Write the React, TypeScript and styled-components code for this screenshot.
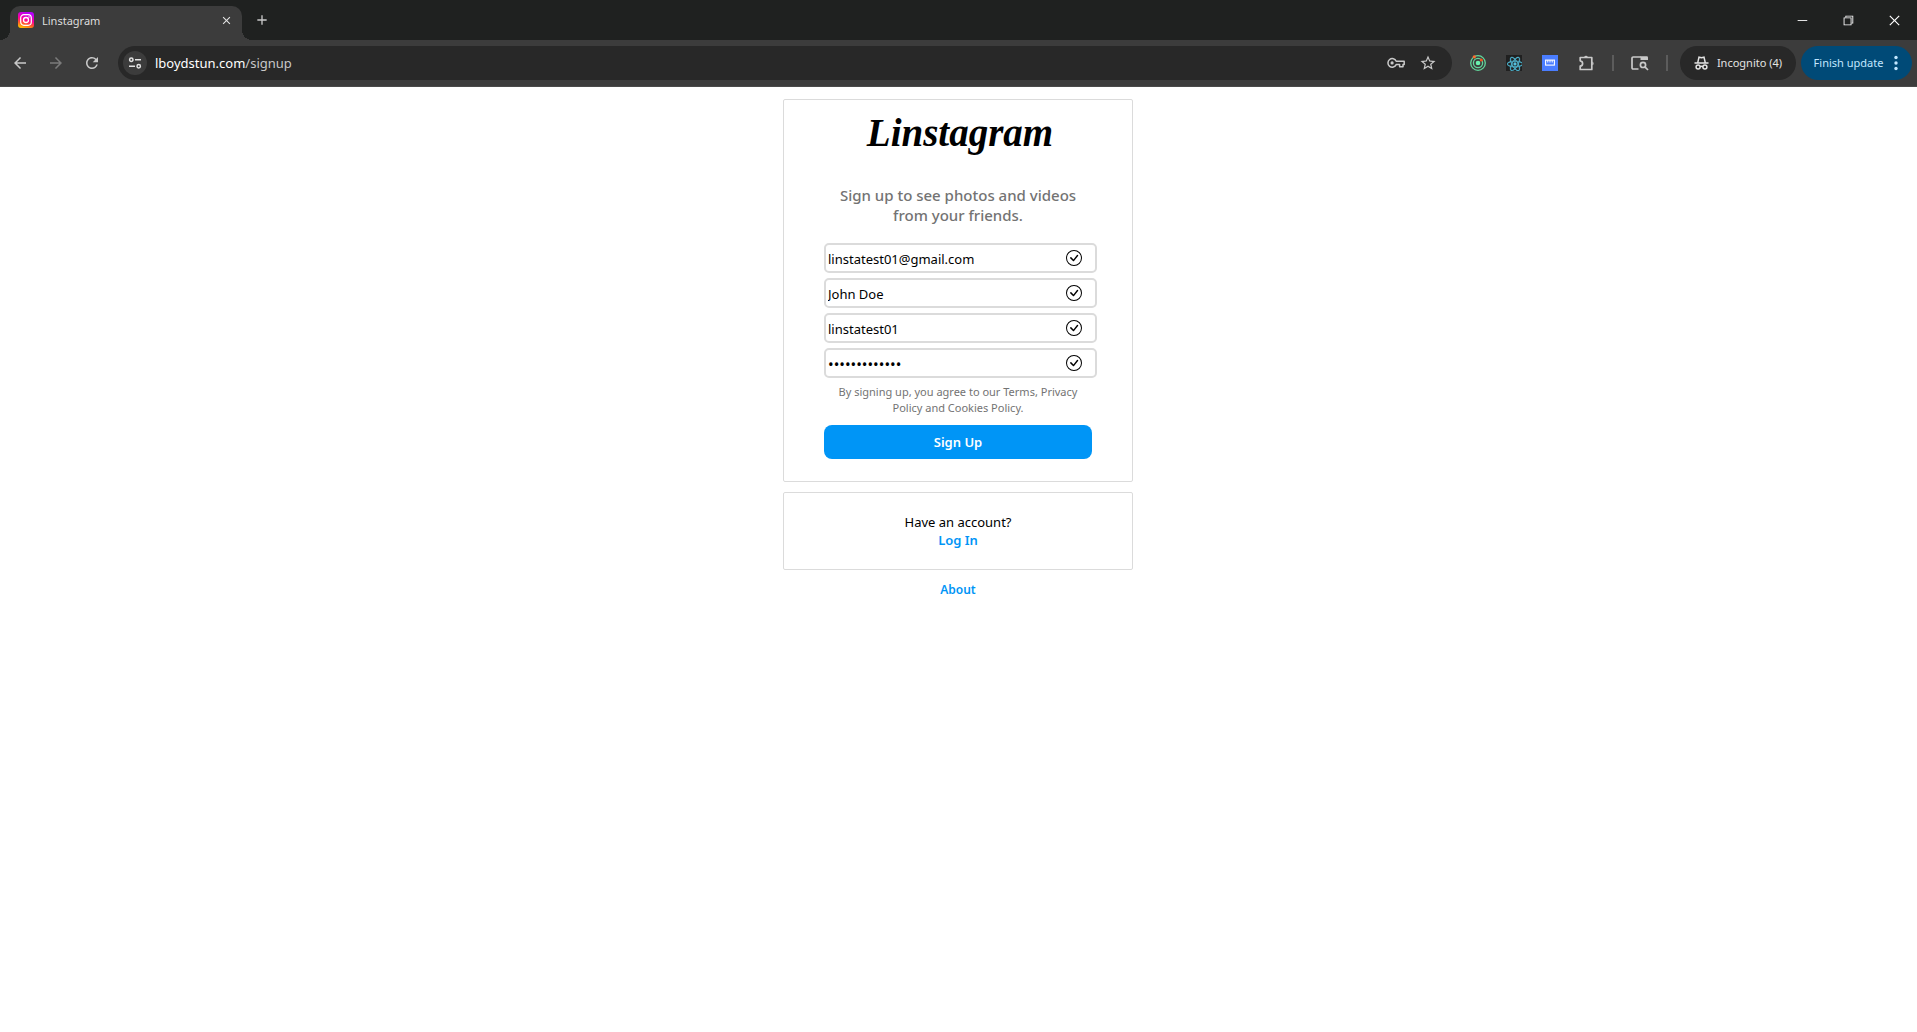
import React from 'react';
import styled, { createGlobalStyle } from 'styled-components';
import { MdArrowBack, MdArrowForward, MdRefresh, MdClose, MdAdd, MdStarBorder } from 'react-icons/md';
import { VscChromeMinimize, VscChromeRestore, VscChromeClose } from 'react-icons/vsc';
import { BsCheckCircle } from 'react-icons/bs';
import { FaReact } from 'react-icons/fa';

const Global = createGlobalStyle`
  * { box-sizing: border-box; }
  body { margin: 0; background: #fff; color: #000; font-family: "Noto Sans", "Open Sans", sans-serif; }
  button { font: inherit; color: inherit; background: none; border: 0; padding: 0; cursor: pointer; }
  input { font: inherit; color: inherit; }
  a { text-decoration: none; }
  svg { display: block; flex: none; }
`;

const TabStrip = styled.header`
  display: flex;
  align-items: flex-end;
  height: 40px;
  padding-left: 10px;
  background: #1f2120;
  color: #dedede;
`;
const Tab = styled.div`
  display: flex;
  align-items: center;
  gap: 8px;
  position: relative;
  width: 232px;
  height: 34px;
  padding: 0 8px;
  padding-bottom: 6px;
  border-radius: 10px 10px 0 0;
  background: #3c3c3c;
  font-size: 11px;
  &::before, &::after {
    content: '';
    position: absolute;
    bottom: 0;
    width: 10px;
    height: 10px;
  }
  &::before { right: 100%; background: radial-gradient(circle at 0 0, transparent 10px, #3c3c3c 10px); }
  &::after { left: 100%; background: radial-gradient(circle at 100% 0, transparent 10px, #3c3c3c 10px); }
`;
const TabTitle = styled.span`flex: 1;`;
const IconButton = styled.button<{ $size?: number; $dim?: boolean }>`
  display: grid;
  place-items: center;
  flex: none;
  width: ${p => p.$size ?? 36}px;
  height: ${p => p.$size ?? 36}px;
  color: ${p => (p.$dim ? '#7b7b7b' : '#c9c9c9')};
`;
const NewTab = styled(IconButton)`margin: 0 0 2px 2px;`;
const WindowControls = styled.div`
  display: flex;
  align-self: stretch;
  margin-left: auto;
  color: #fff;
`;
const WindowButton = styled.button`
  display: grid;
  place-items: center;
  width: 46px;
  height: 40px;
`;

const Toolbar = styled.nav`
  display: flex;
  align-items: center;
  height: 47px;
  padding: 0 5px 1px 2px;
  background: #3c3c3c;
  border-bottom: 1px solid #4a4a4a;
`;
const UrlBar = styled.div`
  display: flex;
  align-items: center;
  flex: 1;
  height: 34px;
  margin: 0 8px;
  padding: 0 8px 0 5px;
  border-radius: 17px;
  background: #282828;
  font-size: 13px;
`;
const SiteInfo = styled(IconButton)`
  margin-right: 8px;
  border-radius: 50%;
  background: #3c3c3c;
`;
const Url = styled.span`flex: 1; color: #c7c7c7;`;
const Host = styled.span`color: #fff;`;
const Divider = styled.span<{ $after: number }>`
  width: 2px;
  height: 16px;
  margin: 0 ${p => p.$after}px 0 8px;
  background: #5c5c5c;
`;
const Pill = styled.button<{ $blue?: boolean }>`
  display: flex;
  align-items: center;
  justify-content: center;
  gap: 8px;
  width: ${p => (p.$blue ? 111 : 116)}px;
  height: 34px;
  margin-left: ${p => (p.$blue ? 5 : 0)}px;
  border-radius: 17px;
  background: ${p => (p.$blue ? '#004a77' : '#282828')};
  color: ${p => (p.$blue ? '#c2e7ff' : '#e3e3e3')};
  font-size: 11px;
  white-space: nowrap;
`;

const Page = styled.main`
  display: flex;
  flex-direction: column;
  align-items: center;
  gap: 10px;
  padding: 12px 1px 0 0;
`;
const Card = styled.section`
  display: flex;
  flex-direction: column;
  align-items: center;
  width: 350px;
  border: 1px solid #dbdbdb;
  border-radius: 2px;
`;
const SignupCard = styled(Card)`padding: 8px 40px 22px;`;
const LoginCard = styled(Card)`
  padding: 20px 0;
  font-size: 13px;
  line-height: 18px;
`;
const Logo = styled.h1`
  margin: 0 0 27px 4px;
  font: italic bold 39px/50px "Liberation Serif", serif;
`;
const Tagline = styled.h2`
  margin: 0 0 18px;
  color: #737373;
  font-size: 15px;
  font-weight: 500;
  line-height: 20px;
  text-align: center;
`;
const Form = styled.form`
  display: flex;
  flex-direction: column;
  width: 268px;
`;
const Field = styled.label`
  display: flex;
  align-items: center;
  width: 273px;
  height: 30px;
  margin-bottom: 5px;
  padding: 0 13px 0 2px;
  border: 2px solid #dbdbdb;
  border-radius: 5px;
`;
const FieldInput = styled.input`
  flex: 1;
  min-width: 0;
  padding: 1px 0 0;
  border: 0;
  outline: 0;
  background: none;
  font-size: 13px;
  &[type='password'] { font-size: 15px; }
`;
const Terms = styled.p`
  margin: 1px 0 9px;
  color: #737373;
  font-size: 11px;
  line-height: 16px;
  text-align: center;
`;
const Submit = styled.button`
  height: 34px;
  border-radius: 8px;
  background: #0095f6;
  color: #fff;
  font-size: 13px;
  font-weight: 600;
`;
const TextLink = styled.a<{ $small?: boolean }>`
  color: #0095f6;
  font-size: ${p => (p.$small ? 12 : 13)}px;
  font-weight: 600;
  line-height: ${p => (p.$small ? 20 : 18)}px;
`;

const Favicon = () => (
  <svg width="16" height="16" viewBox="0 0 16 16" fill="none">
    <defs>
      <linearGradient id="ig" x1="3" y1="16" x2="8" y2="0" gradientUnits="userSpaceOnUse">
        <stop stopColor="#ffc800" /><stop offset=".3" stopColor="#ff5a28" />
        <stop offset=".55" stopColor="#ff0096" /><stop offset="1" stopColor="#b400ff" />
      </linearGradient>
    </defs>
    <rect width="16" height="16" rx="3" fill="url(#ig)" />
    <rect x="2.7" y="2.7" width="10.6" height="10.6" rx="3.2" stroke="#fff" strokeWidth="1.2" />
    <circle cx="8" cy="8" r="2.5" stroke="#fff" strokeWidth="1.3" />
    <circle cx="11" cy="5" r=".7" fill="#fff" />
  </svg>
);
const TuneIcon = () => (
  <svg width="14" height="14" viewBox="0 0 14 14" fill="none" stroke="#e3e3e3" strokeWidth="1.5">
    <circle cx="3.3" cy="3.7" r="1.7" /><path d="M7 3.7h6M1 10.3h6" /><circle cx="10.7" cy="10.3" r="1.7" />
  </svg>
);
const KeyIcon = () => (
  <svg width="18" height="12" viewBox="0 0 18 12" fill="none" stroke="#c9c9c9" strokeWidth="1.5" strokeLinejoin="round">
    <path d="M9.2 4.2H17.2V7.6H16V9.8H12.6V7.6H9.2A4.3 4.3 0 1 1 9.2 4.2Z" />
    <circle cx="5.1" cy="5.9" r="1.6" fill="#c9c9c9" stroke="none" />
  </svg>
);
const OrbitIcon = () => (
  <svg width="16" height="16" viewBox="0 0 16 16" fill="none" stroke="#62d69b" strokeWidth="1.3">
    <circle cx="8" cy="8" r="7.3" /><circle cx="8" cy="8" r="4.6" />
    <circle cx="8" cy="8" r="2.3" fill="#69f0ae" stroke="none" />
    <circle cx="4.3" cy="1.8" r="1.6" fill="#ff6d2d" stroke="none" />
    <circle cx="11.3" cy="5" r="1.5" fill="#f4511e" stroke="none" />
  </svg>
);
const ReactIcon = () => (
  <svg width="16" height="16" viewBox="0 0 16 16">
    <rect width="16" height="16" fill="#202020" />
    <FaReact x="1" y="1" width="14" height="14" color="#53c1de" stroke="#53c1de" strokeWidth="12" />
  </svg>
);
const RulerIcon = () => (
  <svg width="16" height="16" viewBox="0 0 16 16" fill="none">
    <rect width="16" height="16" fill="#4a7dff" />
    <rect x="3.6" y="5.1" width="8.8" height="5" stroke="#fff" strokeWidth="1.1" />
    <path d="M5.8 5v2.5M8 5v2.5M10.2 5v2.5" stroke="#fff" />
  </svg>
);
const PuzzleIcon = () => (
  <svg width="18" height="18" viewBox="0 0 18 18" fill="none" stroke="#c9c9c9" strokeWidth="1.7" strokeLinejoin="round">
    <path d="M3.2 3.5H14.8V15.5H3.2V12.2C4.7 12 5.6 11 5.6 9.5S4.7 7 3.2 6.8Z" />
    <path d="M7.2 3A1.9 1.9 0 0 1 10.8 3ZM15.3 7.6A1.9 1.9 0 0 1 15.3 11.2Z" fill="#c9c9c9" stroke="none" />
  </svg>
);
const PanelSearchIcon = () => (
  <svg width="18" height="16" viewBox="0 0 18 16" fill="none" stroke="#c9c9c9" strokeWidth="1.7">
    <path d="M7.5 14H2.2Q1 14 1 12.8V3.2Q1 2 2.2 2H10" />
    <path d="M9.5 1.2H15.8Q17 1.2 17 2.4V5H9.5Z" fill="#c9c9c9" stroke="none" />
    <circle cx="12" cy="9.9" r="2.6" /><path d="M13.9 11.8L17 15" />
  </svg>
);
const IncognitoIcon = () => (
  <svg width="15" height="14" viewBox="0 0 15 14" fill="none" stroke="#e3e3e3" strokeWidth="1.5">
    <path d="M3.8 6.3L5 1.2L7.5 1.8L10 1.2L11.2 6.3M.5 7H14.5" />
    <circle cx="4.1" cy="11" r="2" /><circle cx="10.9" cy="11" r="2" /><path d="M6 10.7Q7.5 10 9 10.7" />
  </svg>
);
const DotsIcon = () => (
  <svg width="8" height="16" viewBox="0 0 8 16" fill="#c2e7ff">
    <circle cx="5" cy="2.5" r="1.7" /><circle cx="5" cy="8" r="1.7" /><circle cx="5" cy="13.5" r="1.7" />
  </svg>
);

const fields = [
  { label: 'Email', type: 'email', value: 'linstatest01@gmail.com' },
  { label: 'Full name', type: 'text', value: 'John Doe' },
  { label: 'Username', type: 'text', value: 'linstatest01' },
  { label: 'Password', type: 'password', value: 'linstatest01!' },
];

export default function App() {
  return (
    <>
      <Global />
      <TabStrip>
        <Tab>
          <Favicon />
          <TabTitle>Linstagram</TabTitle>
          <IconButton $size={16} aria-label="Close tab"><MdClose size={13} color="#e3e3e3" /></IconButton>
        </Tab>
        <NewTab aria-label="New tab"><MdAdd size={16} /></NewTab>
        <WindowControls>
          <WindowButton aria-label="Minimize"><VscChromeMinimize size={14} /></WindowButton>
          <WindowButton aria-label="Restore"><VscChromeRestore size={14} /></WindowButton>
          <WindowButton aria-label="Close"><VscChromeClose size={15} /></WindowButton>
        </WindowControls>
      </TabStrip>
      <Toolbar>
        <IconButton aria-label="Back"><MdArrowBack size={18} /></IconButton>
        <IconButton aria-label="Forward" $dim><MdArrowForward size={18} /></IconButton>
        <IconButton aria-label="Reload"><MdRefresh size={18} /></IconButton>
        <UrlBar>
          <SiteInfo $size={24} aria-label="Site information"><TuneIcon /></SiteInfo>
          <Url><Host>lboydstun.com</Host>/signup</Url>
          <IconButton $size={32} aria-label="Passwords"><KeyIcon /></IconButton>
          <IconButton $size={32} aria-label="Bookmark"><MdStarBorder size={18} /></IconButton>
        </UrlBar>
        <IconButton aria-label="Orbit"><OrbitIcon /></IconButton>
        <IconButton aria-label="React"><ReactIcon /></IconButton>
        <IconButton aria-label="Ruler"><RulerIcon /></IconButton>
        <IconButton aria-label="Extensions"><PuzzleIcon /></IconButton>
        <Divider $after={8} />
        <IconButton aria-label="Search page"><PanelSearchIcon /></IconButton>
        <Divider $after={12} />
        <Pill><IncognitoIcon />Incognito (4)</Pill>
        <Pill $blue>Finish update<DotsIcon /></Pill>
      </Toolbar>
      <Page>
        <SignupCard>
          <Logo>Linstagram</Logo>
          <Tagline>Sign up to see photos and videos from your friends.</Tagline>
          <Form onSubmit={e => e.preventDefault()}>
            {fields.map(f => (
              <Field key={f.label}>
                <FieldInput aria-label={f.label} type={f.type} defaultValue={f.value} />
                <BsCheckCircle size={16} />
              </Field>
            ))}
            <Terms>By signing up, you agree to our Terms, Privacy Policy and Cookies Policy.</Terms>
            <Submit type="submit">Sign Up</Submit>
          </Form>
        </SignupCard>
        <LoginCard>
          <span>Have an account?</span>
          <TextLink href="#login">Log In</TextLink>
        </LoginCard>
        <TextLink href="#about" $small>About</TextLink>
      </Page>
    </>
  );
}
